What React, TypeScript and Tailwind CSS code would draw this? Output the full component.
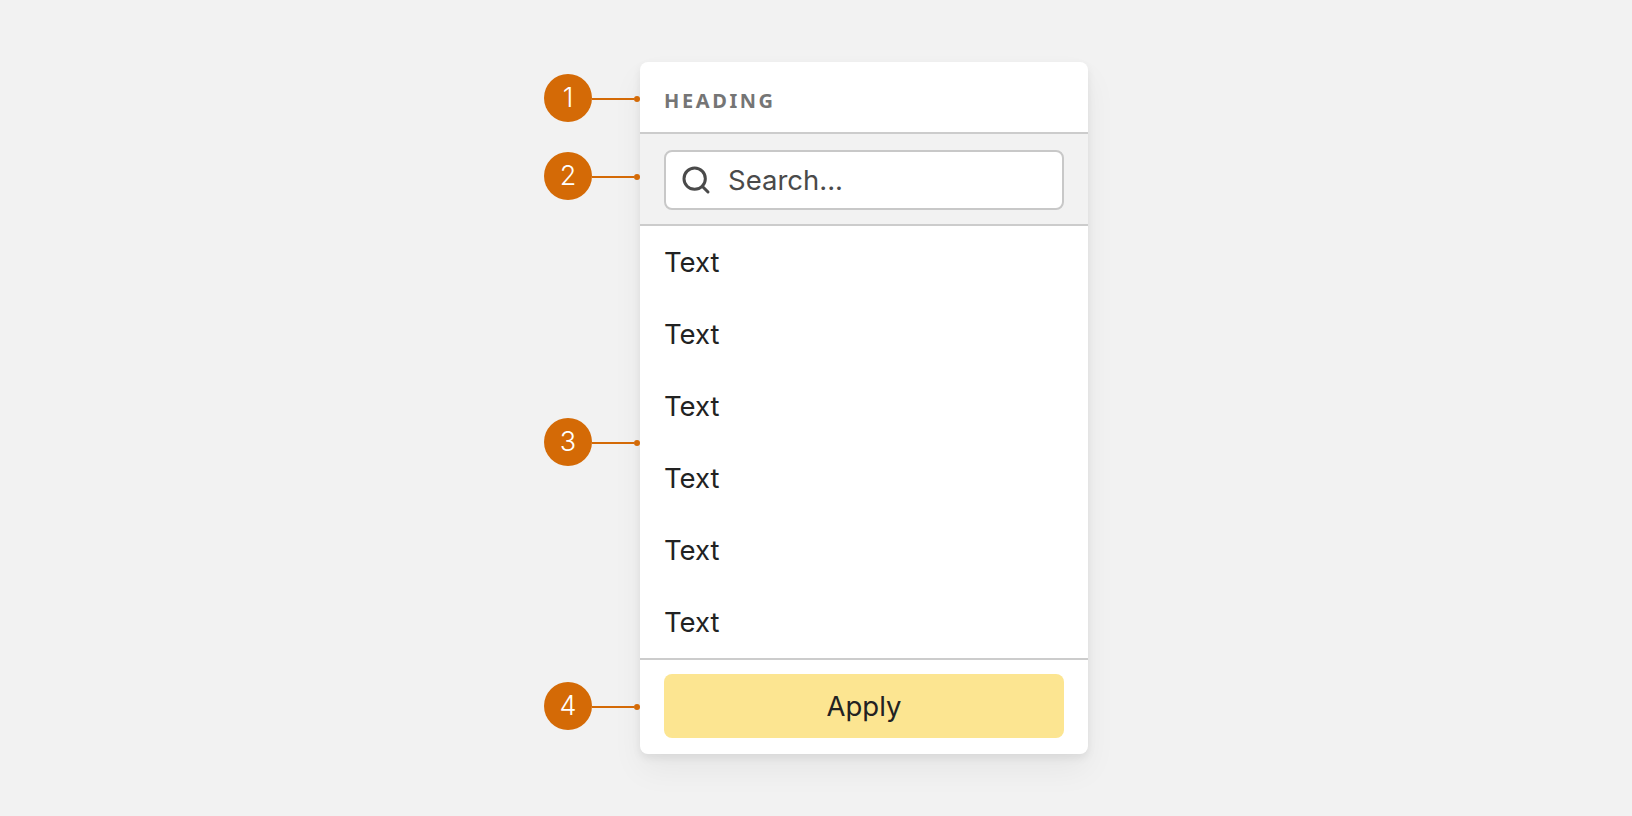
import { Search } from "lucide-react";

function Marker({ n, offset }: { n: number; offset: string }) {
  return (
    <div className={`absolute right-full top-1/2 flex items-center ${offset}`}>
      <div className="flex h-12 w-12 items-center justify-center rounded-full bg-[#d46a06] font-['Inter',sans-serif] text-[27px] font-light text-white">
        {n}
      </div>
      <div className="h-0.5 w-[42px] translate-y-px bg-[#d46a06]" />
      <div className="h-1.5 w-1.5 translate-y-px rounded-full bg-[#d46a06]" />
    </div>
  );
}

const rows = ["Text", "Text", "Text", "Text", "Text", "Text"];

export default function App() {
  return (
    <div className="h-[816px] overflow-hidden bg-[#f2f2f2] pt-[62px] font-['Inter',sans-serif]">
      <div className="mx-auto w-[544px] pl-24">
        <div className="rounded-lg bg-white shadow-[0_4px_8px_rgba(0,0,0,0.07),0_16px_32px_rgba(0,0,0,0.05)]">
          <div className="relative flex h-[70px] items-center px-6 pt-2">
            <Marker n={1} offset="-translate-y-[23px]" />
            <span className="font-['Noto_Sans',sans-serif] text-[20px] font-bold tracking-[0.13em] text-[#757575]">
              HEADING
            </span>
          </div>
          <div className="relative flex h-[94px] items-center border-y-2 border-[#cccccc] bg-[#f2f2f2] px-6 pt-0.5">
            <Marker n={2} offset="-translate-y-[27px]" />
            <div className="flex h-[60px] w-full items-center gap-[16px] rounded-lg border-2 border-[#c8c8c8] bg-white px-[14px]">
              <Search size={32} strokeWidth={2.25} className="text-[#4a4a4a]" />
              <span className="pt-0.5 text-[27.5px] text-[#4a4a4a]">Search...</span>
            </div>
          </div>
          <div className="relative">
            <Marker n={3} offset="-translate-y-6" />
            {rows.map((t, i) => (
              <div key={i} className="flex h-[72px] items-center px-6 pt-0.5 text-[27.5px] text-[#222222]">
                {t}
              </div>
            ))}
          </div>
          <div className="relative border-t-2 border-[#cccccc] px-6 pb-4 pt-[14px]">
            <Marker n={4} offset="-translate-y-[25px]" />
            <div className="flex h-16 items-center justify-center rounded-lg bg-[#fce591] pt-0.5 text-[27.5px] text-[#222222]">
              Apply
            </div>
          </div>
        </div>
      </div>
    </div>
  );
}
